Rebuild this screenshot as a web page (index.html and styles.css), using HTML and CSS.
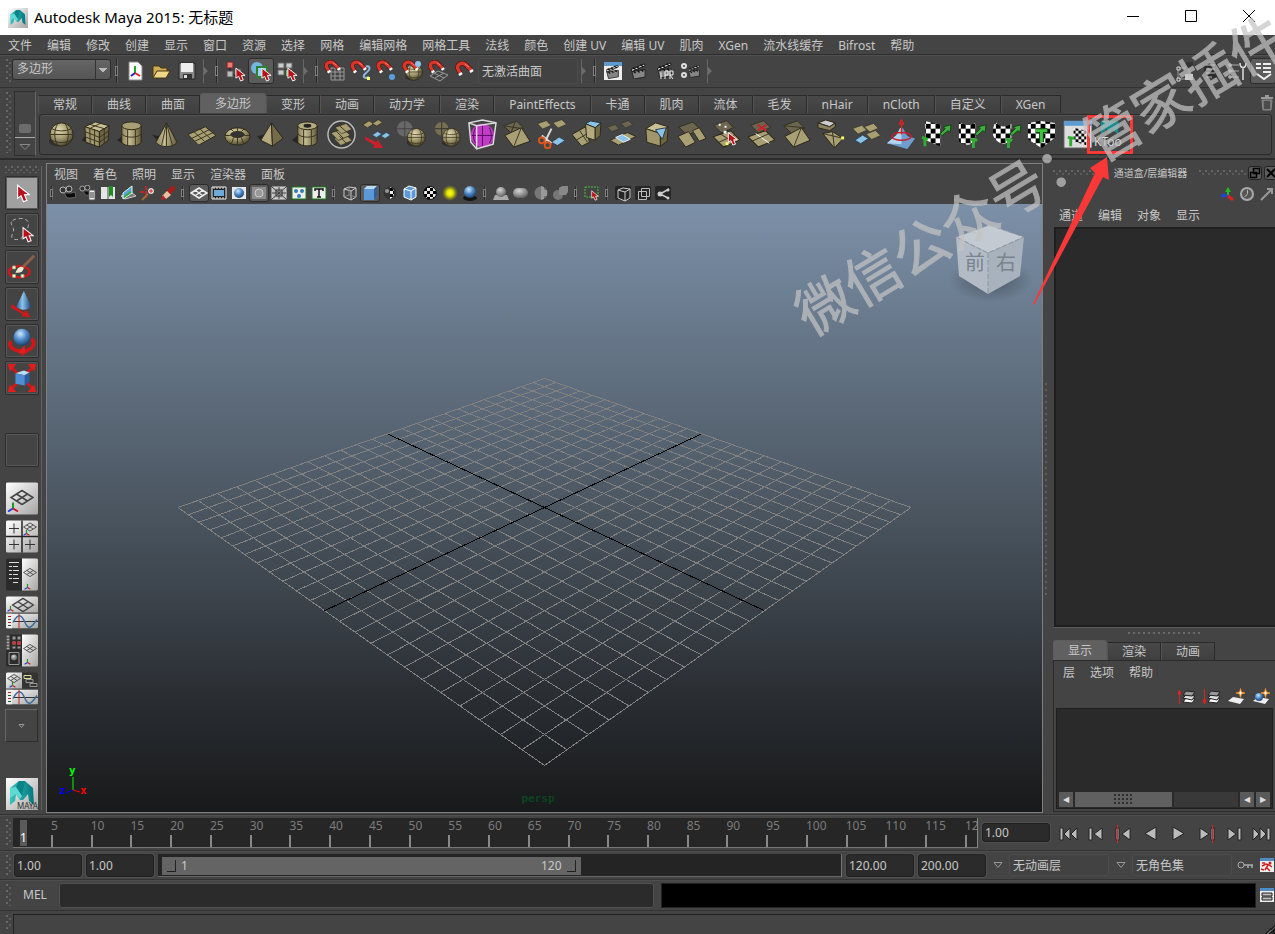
FILE: index.html
```
<!DOCTYPE html>
<html lang="zh-CN">
<head>
    <meta charset="UTF-8">
    <meta name="viewport" content="width=device-width, initial-scale=1.0">
    <title>Autodesk Maya 2015: 无标题</title>
    <link rel="stylesheet" href="styles.css">
</head>
<body>

    <!-- shared gradients and symbols -->
    <svg class="defs" width="0" height="0" aria-hidden="true">
        <defs>
            <radialGradient id="tanBall" cx=".4" cy=".3" r=".75"><stop offset="0" stop-color="#e3dbb4"/><stop offset=".5" stop-color="#a3996e"/><stop offset="1" stop-color="#443f28"/></radialGradient>
            <linearGradient id="tan" x1="0" x2="1"><stop offset="0" stop-color="#8d845c"/><stop offset=".4" stop-color="#c4ba90"/><stop offset="1" stop-color="#5f583b"/></linearGradient>
            <radialGradient id="blueBall" cx=".4" cy=".3" r=".75"><stop offset="0" stop-color="#cfe8ff"/><stop offset=".5" stop-color="#4c88c6"/><stop offset="1" stop-color="#173763"/></radialGradient>
            <radialGradient id="greyBall" cx=".4" cy=".3" r=".75"><stop offset="0" stop-color="#d5d5d5"/><stop offset="1" stop-color="#5a5a5a"/></radialGradient>
            <radialGradient id="yellowBall"><stop offset="0" stop-color="#ffff30"/><stop offset=".4" stop-color="#e0e000"/><stop offset="1" stop-color="#a0a000" stop-opacity="0"/></radialGradient>
            <radialGradient id="cubeShade"><stop offset="0" stop-color="#333d47" stop-opacity=".6"/><stop offset="1" stop-color="#333d47" stop-opacity="0"/></radialGradient>
            <linearGradient id="blueCone" x1="0" x2="1"><stop offset="0" stop-color="#2b5f9c"/><stop offset=".4" stop-color="#8cc4ee"/><stop offset="1" stop-color="#1c3f70"/></linearGradient>
            <linearGradient id="teal" x1="0" x2="1"><stop offset="0" stop-color="#35c4c0"/><stop offset="1" stop-color="#04777c"/></linearGradient>
            <linearGradient id="paper" x1="0" x2="1" y1="0" y2="1"><stop offset="0" stop-color="#fff"/><stop offset="1" stop-color="#a5a5a5"/></linearGradient>
            <pattern id="check" width="10" height="10" patternUnits="userSpaceOnUse"><path fill="#fff" d="M0 0h10v10H0z"/><path d="M0 0h5v5H0zM5 5h5v5H5z"/></pattern>
            <pattern id="checkS" width="6" height="6" patternUnits="userSpaceOnUse"><path fill="#eee" d="M0 0h6v6H0z"/><path d="M0 0h3v3H0zM3 3h3v3H3z"/></pattern>
        </defs>
        <symbol id="cursor" viewBox="0 0 12 16"><path d="M1 1v11l3-2 2 5 3-1-2-5h4z" fill="#b8111a" stroke="#fff"/></symbol>
        <symbol id="magnet" viewBox="0 0 20 20"><path d="m5 12-2-4C1 4 7 0 11 4l5 5" fill="none" stroke="#5a1512" stroke-width="5"/><path d="m5 12-2-4C1 4 7 0 11 4l5 5" fill="none" stroke="#d8372c" stroke-width="3.500"/><path d="m10 3 4 3" stroke="#f08a7c"/><path d="m4 14 3-2M15 11l3-2" stroke="#fff" stroke-width="2.500"/></symbol>
        <symbol id="clap" viewBox="1 1 17 17"><path d="M2 10 16 8v8L4 18z" fill="#858585" stroke="#222"/><path d="m1 8 14-6 1 2L2 10z" fill="#e4e4e4" stroke="#111"/><path d="m3 6 3 2M7 5l3 2M11 3l3 2M4 10l2 2M8 9l2 2M12 8l2 2" stroke="#111" stroke-width="1.500"/></symbol>
        <symbol id="tripod" viewBox="0 0 12 12"><path d="M6 7V1" stroke="#1a9a1a" stroke-width="2"/><path d="M6 7 1 10" stroke="#1c3fe0" stroke-width="2"/><path d="m6 7 5 3" stroke="#d01818" stroke-width="2"/></symbol>
        <symbol id="mesh" viewBox="0 0 24 16"><path d="M12 1 23 8l-11 7L1 8zM6.500 4.500l11 7M17.500 4.500l-11 7" fill="none" stroke="#444" stroke-width="1.500"/></symbol>
        <symbol id="camera" viewBox="0 0 18 16"><circle cx="4" cy="5" r="3" fill="#333" stroke="#bbb"/><circle cx="10" cy="4" r="3" fill="#333" stroke="#bbb"/><path d="M5 8h7l4-1 1 5-4 1H8z" fill="#0c0c0c" stroke="#666"/></symbol>
        <symbol id="quad" viewBox="0 0 18 12"><path d="m1 7 9-6 7 4-9 6z" fill="#a89d70" stroke="#2c2919"/></symbol>
        <symbol id="quadDark" viewBox="0 0 18 12"><path d="m1 7 9-6 7 4-9 6z" fill="#6c6650" stroke="#2c2919"/></symbol>
        <symbol id="quadBlue" viewBox="0 0 18 12"><path d="m1 7 9-6 7 4-9 6z" fill="#8bc3e8" stroke="#25394a"/></symbol>
        <!-- wide tile, lies flatter than quad -->
        <symbol id="tile" viewBox="0 0 28 18"><path d="M1 7 18 1l9 9-16 7z" fill="#a99f75" stroke="#2b2817"/></symbol>
        <symbol id="tileDark" viewBox="0 0 28 18"><path d="M1 7 18 1l9 9-16 7z" fill="#6c6650" stroke="#2b2817"/></symbol>
        <symbol id="ball" viewBox="0 0 26 26"><ellipse cx="9" cy="20" rx="9" ry="5" fill="#222" opacity=".6"/><circle cx="13" cy="13" r="12" fill="url(#tanBall)" stroke="#2b2817"/><path d="M9 2c-4 7-4 15 0 22M17 2c4 7 4 15 0 22M1 13h24M3 7c6 3 14 3 20 0M3 19c6 3 14 3 20 0" fill="none" stroke="#39341f"/></symbol>
        <symbol id="greenArrow" viewBox="0 0 14 12"><path d="m1 11 6-6-2-2 8-2-1 8-2-2-6 5z" fill="#3fae3f" stroke="#123f12"/></symbol>
        <symbol id="maya" viewBox="0 0 32 32"><path d="M0 0h32v32H0z" fill="url(#paper)"/><path d="M4 10 13 3h6l8 7 1 17-5-4-1-7-5 6h-3l-4-6-1 7-5 4z" fill="url(#teal)"/><path d="M13 3h6l-3 15-6-9z" fill="#0a8388"/><path d="m4 10 6-1 6 9-2 3-4-5-6 4z" fill="#5fd9d2"/></symbol>
        <symbol id="layers" viewBox="0 0 14 16"><path d="m1 13 3-4 9 1-3 4z" fill="#fff" stroke="#222"/><path d="m1 9 3-3 9 1-3 4z" fill="#ddd" stroke="#222"/><path d="m1 6 3-4 9 1-3 4z" fill="#999" stroke="#222"/></symbol>
        <symbol id="spark" viewBox="0 0 10 10"><path d="m5 0 1 4 4 1-4 1-1 4-1-4-4-1 4-1z" fill="#fff" stroke="#f08a1c"/></symbol>
        <symbol id="curve" viewBox="0 0 32 15"><path fill="url(#paper)" d="M0 0h32v15H0z"/><path d="M0 0h6v15H0z" fill="#eee"/><path d="M2 3h3M2 9h3" stroke="#b22"/><path d="M2 6h3M2 12h3" stroke="#252"/><path d="M7 8h25" stroke="#333"/><path d="M7 9c5-9 8-9 12 0s7 4 12-3" fill="none" stroke="#3a6c9c" stroke-width="1.500"/><path d="M13 0v15" stroke="#c22"/></symbol>
    </svg>

    <header class="titlebar">
        <svg class="app-icon" width="20" height="20"><use href="#maya"/></svg>
        <h1>Autodesk Maya 2015: 无标题</h1>
        <div class="window-buttons">
            <button aria-label="最小化"><svg width="14" height="14"><path d="M1 7.500h12" stroke="#000"/></svg></button>
            <button aria-label="最大化"><svg width="14" height="14"><path d="M1.500 1.500h11v11h-11z" fill="none" stroke="#000"/></svg></button>
            <button aria-label="关闭"><svg width="14" height="14"><path d="m1 1 12 12M13 1 1 13" stroke="#000"/></svg></button>
        </div>
    </header>

    <nav class="menubar">
        <button>文件</button><button>编辑</button><button>修改</button><button>创建</button><button>显示</button><button>窗口</button><button>资源</button><button>选择</button><button>网格</button><button>编辑网格</button><button>网格工具</button><button>法线</button><button>颜色</button><button>创建 UV</button><button>编辑 UV</button><button>肌肉</button><button>XGen</button><button>流水线缓存</button><button>Bifrost</button><button>帮助</button>
    </nav>

    <!-- status line -->
    <div class="statusline">
        <span class="dragger"></span>
        <select class="menu-set" aria-label="菜单集"><option>多边形</option></select>
        <span class="grip"></span>
        <div class="tools">
            <button aria-label="新建场景"><svg width="20" height="20"><path d="M4 1h9l4 4v14H4z" fill="#fff" stroke="#888"/><path d="M10 12V5" stroke="#2a2" stroke-width="2"/><path d="m10 12-4 3" stroke="#22c" stroke-width="2"/><path d="m10 12 5 3" stroke="#d22" stroke-width="2"/></svg></button>
            <button aria-label="打开场景"><svg width="20" height="20"><path d="M2 17V5h6l2 2h6v3" fill="#cdaa55" stroke="#4a3810"/><path d="m2 17 4-7h13l-4 7z" fill="#f0d68a" stroke="#4a3810"/></svg></button>
            <button aria-label="保存场景"><svg width="20" height="20"><path d="M2 2h16v16H2z" fill="#8a8a8a" stroke="#222"/><path d="M4 2h12v9H4z" fill="#eee"/><path d="M6 13h9v5H6z" fill="#333"/><path d="M7 14h3v3H7z" fill="#ddd"/></svg></button>
        </div>
        <span class="fold"></span>
        <span class="grip"></span>
        <div class="tools">
            <button aria-label="按层次选择"><svg width="24" height="22"><path d="M7 7v8h7" fill="none" stroke="#111"/><path d="M4 2h6v6H4z" fill="#e77" stroke="#722"/><path d="M4 11h6v6H4z" fill="#bbb" stroke="#555"/><path d="M12 9h6v6h-6z" fill="#999" stroke="#555"/><use href="#cursor" x="12" y="7" width="11" height="15"/></svg></button>
            <button class="on" aria-label="按对象类型选择"><svg width="24" height="22"><circle cx="8" cy="8" r="6" fill="#70b7e2"/><path d="M8 7h10v10H8z" fill="#9bd2ef" stroke="#2f7f2f" stroke-width="2"/><use href="#cursor" x="12" y="7" width="11" height="15"/></svg></button>
            <button aria-label="按组件类型选择"><svg width="24" height="22"><path d="M3 3h6v5H3zM11 3h6v5h-6zM3 10h6v5H3z" fill="#ccc" stroke="#666"/><path d="M11 10h6v6h-6z" fill="#69c46e"/><use href="#cursor" x="12" y="7" width="11" height="15"/></svg></button>
        </div>
        <span class="fold"></span>
        <span class="grip"></span>
        <div class="tools">
            <button aria-label="捕捉到栅格"><svg width="24" height="24"><path d="M8 9h13v12H8zM12 9v12M17 9v12M8 13h13M8 17h13" fill="none" stroke="#999"/><use href="#magnet" x="1" y="1" width="18" height="18"/></svg></button>
            <button aria-label="捕捉到曲线"><svg width="24" height="24"><path d="M13 9c8-4 10 0 4 5-5 4-1 6 3 4" fill="none" stroke="#8cb9dc" stroke-width="2"/><path d="M18 18h3v3h-3z" fill="#ff6"/><use href="#magnet" x="1" y="1" width="18" height="18"/></svg></button>
            <button aria-label="捕捉到点"><svg width="24" height="24"><circle cx="17" cy="18" r="3" fill="#5aa0dd"/><use href="#magnet" x="1" y="1" width="18" height="18"/></svg></button>
            <button aria-label="捕捉到投影中心"><svg width="24" height="24"><use href="#ball" x="4" y="4" width="18" height="18"/><use href="#magnet" x="1" y="1" width="18" height="18"/><circle cx="17" cy="5" r="3" fill="#8cc4ee"/></svg></button>
            <button aria-label="捕捉到视图平面"><svg width="24" height="24"><path d="m3 17 8-5 10 4-8 6zM7 14l10 5M17 14l-9 5" fill="none" stroke="#999"/><use href="#magnet" x="1" y="1" width="18" height="18"/></svg></button>
            <button aria-label="激活选定对象"><svg width="24" height="24"><use href="#magnet" x="2" y="2" width="20" height="20"/></svg></button>
        </div>
        <input class="live-surface" aria-label="激活曲面" value="无激活曲面">
        <span class="fold"></span>
        <span class="grip"></span>
        <div class="tools">
            <button aria-label="渲染视图"><svg width="22" height="22"><path d="M2 2h18v18H2z" fill="#eee"/><path d="M2 2h18v4H2z" fill="#5d9bd0"/><use href="#clap" x="4" y="4" width="14" height="15"/></svg></button>
            <button aria-label="渲染当前帧"><svg width="22" height="22"><use href="#clap" x="3" y="3" width="16" height="16"/></svg></button>
            <button aria-label="IPR 渲染"><svg width="22" height="22"><use href="#clap" x="3" y="2" width="16" height="16"/><path d="M7 11v8M11 19v-8h3v4h-3M16 19v-8h3v4h-3l3 4" fill="none" stroke="#eee"/></svg></button>
            <button aria-label="渲染设置"><svg width="22" height="22"><circle cx="4" cy="6" r="2" fill="none" stroke="#ddd" stroke-width="2"/><circle cx="4" cy="15" r="2" fill="none" stroke="#ddd" stroke-width="2"/><use href="#clap" x="8" y="3" width="13" height="16"/></svg></button>
        </div>
        <span class="fold"></span>
        <div class="tools sidebar-toggles">
            <button aria-label="建模工具包"><svg width="22" height="22"><path d="M4 8h11v11H4z" fill="none" stroke="#999"/><path d="M12 2h7v7h-7z" fill="#333"/><path d="M11 14h8v6h-8z" fill="#ccc"/><path d="M3 7h3v3H3zM3 18h3v3H3z" fill="#444" stroke="#ddd"/></svg></button>
            <button aria-label="属性编辑器"><svg width="22" height="22"><path d="M4 3h13v15H4z" fill="#2c2c2c"/><path d="M6 5h9M6 9h9M6 13h9M6 17h6" stroke="#bbb"/></svg></button>
            <button aria-label="工具设置"><svg width="22" height="22"><path d="M3 5h10M3 11h10M3 17h10" stroke="#aaa"/><path d="M3 4h2v2H3zM3 10h2v2H3zM3 16h2v2H3z" fill="#222" stroke="#ddd"/><path d="M17 8v12M14 3c0 6 6 6 6 0" fill="none" stroke="#ddd" stroke-width="1.500"/></svg></button>
            <button class="on" aria-label="通道盒"><svg width="22" height="22"><path d="M4 3h5v2H4zM4 7h5v2H4zM11 3h8v2h-8zM11 7h8v2h-8zM11 11h8v2h-8z" fill="#eee"/><path d="m5 14 7 5 7-5" fill="none" stroke="#eee" stroke-width="2"/></svg></button>
        </div>
    </div>

    <!-- shelf -->
    <div class="shelf">
        <span class="dragger"></span>
        <div class="shelf-side">
            <button class="shelf-chip" aria-label="切换工具架选项卡"></button>
            <button class="shelf-menu" aria-label="工具架菜单"><svg width="12" height="8"><path d="M1 1.500h10l-5 5z" fill="#444" stroke="#888"/></svg></button>
        </div>
        <div class="shelf-body">
            <div class="tabs">
                <button>常规</button><button>曲线</button><button>曲面</button><button class="active">多边形</button><button>变形</button><button>动画</button><button>动力学</button><button>渲染</button><button>PaintEffects</button><button>卡通</button><button>肌肉</button><button>流体</button><button>毛发</button><button>nHair</button><button>nCloth</button><button>自定义</button><button>XGen</button>
                <svg class="trash" width="14" height="16"><path d="M1 3h12M5 1h4" stroke="#999" stroke-width="2"/><path d="M2 5h10l-1 10H3z" fill="#777" stroke="#888"/><path d="M5 6v8M7 6v8M9 6v8" stroke="#222"/></svg>
            </div>
            <div class="shelf-icons">
                <button aria-label="球体"><svg viewBox="0 0 32 32"><use href="#ball" x="3" y="3" width="26" height="26"/></svg></button>
                <button aria-label="立方体"><svg viewBox="0 0 32 32"><path d="M1 22 8 12v14z" fill="#262626"/><path d="m4 8 11-5 14 4-10 6z" fill="#c9bf94" stroke="#2b2817"/><path d="m4 8 15 5v16L5 24z" fill="#a1966c" stroke="#2b2817"/><path d="m19 13 10-6-1 15-9 7z" fill="#6c6443" stroke="#2b2817"/><path d="m9 9.500.5 16M14 11v17M4 13l15 6 10-7M4.500 18.500 19 24l9.500-7M9 5.500l15 4.500M24 10v15M9.500 9.500 20 4.500" fill="none" stroke="#39341f"/></svg></button>
                <button aria-label="圆柱体"><svg viewBox="0 0 32 32"><path d="M1 22 8 16v10z" fill="#262626"/><path d="M6 7v17c2 5 18 5 20 0V7z" fill="url(#tan)" stroke="#2b2817"/><ellipse cx="16" cy="7" rx="10" ry="4" fill="#a99f75" stroke="#2b2817"/><path d="M6 15c2 5 18 5 20 0M12 11v17M20 11v17" fill="none" stroke="#39341f"/></svg></button>
                <button aria-label="圆锥体"><svg viewBox="0 0 32 32"><path d="m1 16 12 3-4 6z" fill="#262626"/><path d="m16 4 11 20c-4 6-18 6-22 0z" fill="url(#tan)" stroke="#2b2817"/><path d="m16 4-5 23M16 4v24M16 4l6 23" stroke="#39341f"/></svg></button>
                <button aria-label="平面"><svg viewBox="0 0 32 32"><path d="m2 16 18-8 11 9-18 10z" fill="#a99f75" stroke="#2b2817"/><path d="m8 13 11 10M14 10l11 10M6 20l18-9M9 23l19-9" stroke="#39341f"/></svg></button>
                <button aria-label="圆环"><svg viewBox="0 0 32 32"><ellipse cx="17" cy="18" rx="13" ry="9" fill="url(#tanBall)" stroke="#2b2817"/><ellipse cx="17" cy="16" rx="7" ry="3" fill="#333" stroke="#2b2817"/><path d="m4 17 6 0M30 17h-6M10 10l3 3M24 10l-3 3M11 25l2-6M23 25l-2-6M17 9v4M17 19v8" stroke="#39341f"/></svg></button>
                <button aria-label="棱锥"><svg viewBox="0 0 32 32"><path d="m1 18 10-3-5 8z" fill="#262626"/><path d="M16 4 5 22l12 6z" fill="#b6ab80" stroke="#2b2817"/><path d="m16 4 12 16-11 8z" fill="#746b49" stroke="#2b2817"/></svg></button>
                <button aria-label="管道"><svg viewBox="0 0 32 32"><path d="M1 22 8 16v10z" fill="#262626"/><path d="M7 7v17c2 5 18 5 20 0V7z" fill="url(#tan)" stroke="#2b2817"/><ellipse cx="17" cy="7" rx="10" ry="4" fill="#b6ab80" stroke="#2b2817"/><ellipse cx="17" cy="7" rx="4" ry="2" fill="#222"/><path d="M7 15c2 5 18 5 20 0M13 11v17M21 11v17" fill="none" stroke="#39341f"/></svg></button>
                <button aria-label="平滑"><svg viewBox="0 0 32 32"><circle cx="16" cy="16" r="14" fill="#3a3a3a" stroke="#bbb" stroke-width="1.500"/><use href="#tile" x="7" y="15" width="21" height="13"/><use href="#tile" x="4" y="9" width="22" height="14"/><use href="#tile" x="8" y="4" width="20" height="12"/><path d="m14 7 8 7M10 12l8 8M14 18l7 7" stroke="#39341f"/></svg></button>
                <button aria-label="提取"><svg viewBox="0 0 32 32"><use href="#quad" x="1" y="1" width="13" height="9"/><use href="#quad" x="11" y="0" width="12" height="8"/><use href="#quadBlue" x="11" y="12" width="11" height="8"/><use href="#quadBlue" x="20" y="13" width="11" height="8"/><path d="m4 18 12 6 1-3 6 9-11 0 2-3-10-6z" fill="#c9202a"/></svg></button>
                <button aria-label="结合"><svg viewBox="0 0 32 32"><circle cx="9" cy="10" r="8" fill="#777" opacity=".7"/><path d="M9 2v16M1 10h16" stroke="#444"/><use href="#ball" x="11" y="9" width="20" height="20"/></svg></button>
                <button aria-label="分离"><svg viewBox="0 0 32 32"><circle cx="11" cy="10" r="7" fill="#767052"/><path d="M11 3v14M4 10h14" stroke="#333"/><use href="#ball" x="11" y="9" width="20" height="20"/></svg></button>
                <button aria-label="平滑代理"><svg viewBox="0 0 32 32"><circle cx="17" cy="17" r="12" fill="#c03cc6"/><path d="M17 6v22M6 17h22M10 9c-3 5-3 12 0 16M24 9c3 5 3 12 0 16" fill="none" stroke="#5c0c62"/><path d="m3 4 14-3 14 3-3 22-17 5-6-7zM3 4l8 3 20-3M11 7v24" fill="none" stroke="#ddd" stroke-width="1.500"/></svg></button>
                <button aria-label="三角化"><svg viewBox="0 0 32 32"><use href="#tileDark" x="2" y="1" width="22" height="15"/><path d="m3 7 19 3M15 2l-5 13" stroke="#39341f"/><path d="m4 17 17-8 9 14-17 6z" fill="#a99f75" stroke="#2b2817"/><path d="M21 9 13 29" stroke="#39341f"/></svg></button>
                <button aria-label="剪切"><svg viewBox="0 0 32 32"><use href="#tile" x="1" y="1" width="15" height="10"/><use href="#tile" x="17" y="0" width="15" height="10"/><use href="#quadBlue" x="15" y="17" width="16" height="12"/><path d="M16 10 9 24M6 17l10 8" stroke="#ddd" stroke-width="2"/><circle cx="6" cy="22" r="3" fill="none" stroke="#d8561c" stroke-width="2"/><circle cx="12" cy="27" r="3" fill="none" stroke="#d8561c" stroke-width="2"/></svg></button>
                <button aria-label="挤出"><svg viewBox="0 0 32 32"><path d="m1 16 14-8 4 16-8 4z" fill="#a99f75" stroke="#2b2817"/><path d="m5 22 12-7M9 12l8 12" stroke="#39341f"/><path d="m15 5 5-3 11 2-6 5z" fill="#8bc3e8" stroke="#25394a"/><path d="m15 5 10 4v13l-9-3z" fill="#b6ab80" stroke="#2b2817"/><path d="m25 9 6-5-1 13-5 5z" fill="#746b49" stroke="#2b2817"/></svg></button>
                <button aria-label="桥接"><svg viewBox="0 0 32 32"><use href="#tileDark" x="1" y="5" width="13" height="9"/><use href="#tileDark" x="15" y="1" width="13" height="9"/><path d="m4 22 18-8 9 4-18 9z" fill="#a99f75" stroke="#2b2817"/><path d="m10 19 7-3 8 5-7 3z" fill="#8bc3e8" stroke="#eee"/></svg></button>
                <button aria-label="倒角"><svg viewBox="0 0 32 32"><path d="m5 10 10-6 13 4-8 7z" fill="#c9bf94" stroke="#2b2817"/><path d="m5 10 15 5v13L6 24z" fill="#a1966c" stroke="#2b2817"/><path d="m20 15 8-7-1 15-7 5z" fill="#6c6443" stroke="#2b2817"/><path d="m15 11 11-2-4 12z" fill="#8bc3e8" stroke="#25394a"/></svg></button>
                <button aria-label="合并"><svg viewBox="0 0 32 32"><use href="#tileDark" x="2" y="2" width="24" height="16"/><path d="m2 18 11-5 7 11-10 5zM17 12l7-3 7 11-7 3z" fill="#a99f75" stroke="#2b2817"/></svg></button>
                <button aria-label="目标焊接"><svg viewBox="0 0 32 32"><use href="#tileDark" x="2" y="1" width="22" height="14"/><use href="#tile" x="1" y="11" width="30" height="19"/><path d="m9 15 14 9M8 24l16-7" stroke="#39341f"/><path d="M8 5h2v2H8zM14 7h2v2h-2zM13 12h3v3h-3z" fill="#fff"/><path d="M15 24h3v3h-3z" fill="#ff6"/><use href="#cursor" x="17" y="13" width="11" height="15"/></svg></button>
                <button aria-label="合并到中心"><svg viewBox="0 0 32 32"><use href="#tileDark" x="4" y="1" width="22" height="14"/><use href="#tile" x="1" y="11" width="30" height="19"/><path d="m10 15 14 10" stroke="#fff"/><path d="m6 23 18-8" stroke="#39341f"/><path d="m12 6 9 6M12 12l9-6" stroke="#c9202a" stroke-width="2"/></svg></button>
                <button aria-label="翻转三角形"><svg viewBox="0 0 32 32"><use href="#tileDark" x="2" y="1" width="23" height="15"/><path d="m3 7 21 2" stroke="#39341f"/><path d="m4 18 17-9 9 13-17 7z" fill="#a99f75" stroke="#2b2817"/><path d="M21 9 13 29" stroke="#39341f"/></svg></button>
                <button aria-label="多切割"><svg viewBox="0 0 32 32"><path d="m2 4 8-3 10 3-6 4z" fill="#ccc" stroke="#2b2817"/><path d="M2 4v5l12 3 6-4V4l-6 4z" fill="#8a8160" stroke="#2b2817"/><path d="m7 15 10-2 11 7-9 10z" fill="#a99f75" stroke="#2b2817"/><path d="m7 15 21 5M19 30l-2-17" stroke="#39341f"/><path d="M26 18h3v3h-3z" fill="#ff6"/></svg></button>
                <button aria-label="插入循环边"><svg viewBox="0 0 32 32"><use href="#tile" x="1" y="6" width="16" height="10"/><use href="#tile" x="13" y="4" width="16" height="10"/><use href="#tile" x="15" y="11" width="16" height="11"/><use href="#quadBlue" x="3" y="15" width="16" height="12"/></svg></button>
                <button aria-label="软选择"><svg viewBox="0 0 32 32"><path d="m1 25 8-7c4-2 4-9 7-9s3 6 7 9l7 2-8 11z" fill="#6e9dd0"/><path d="m1 25 8-7c4-2 4-9 7-9v17z" fill="#b4d4f2"/><ellipse cx="16" cy="18" rx="10" ry="4" fill="none" stroke="#c9202a" stroke-width="1.500"/><path d="M16 16V4M14 5l2-4 2 4z" fill="none" stroke="#d22" stroke-width="1.500"/></svg></button>
                <button aria-label="平面 UV"><svg viewBox="0 0 32 32"><path d="m4 2 16 4v22L5 22z" fill="url(#check)"/><use href="#greenArrow" x="18" y="5" width="14" height="12"/><path d="m1 19 6 2M4 20v8" stroke="#2fae2f" stroke-width="3"/></svg></button>
                <button aria-label="圆柱 UV"><svg viewBox="0 0 32 32"><path d="M3 3c5 4 12 4 17 1v20c-6 4-13 3-17-1z" fill="url(#check)"/><use href="#greenArrow" x="18" y="5" width="14" height="12"/><path d="m15 21 7 1M18 22v8" stroke="#2fae2f" stroke-width="3"/></svg></button>
                <button aria-label="球形 UV"><svg viewBox="0 0 32 32"><path d="M5 3c3 6 11 6 16 2v19C12 29 2 22 2 15 2 10 3 5 5 3z" fill="url(#check)"/><use href="#greenArrow" x="18" y="5" width="14" height="12"/><path d="m15 21 7 1M18 22v8" stroke="#2fae2f" stroke-width="3"/></svg></button>
                <button aria-label="自动 UV"><svg viewBox="0 0 32 32"><path d="m2 4 13-2 15 2v15l-14 11L2 21z" fill="url(#check)"/><path d="M10 12h12M16 12v12" stroke="#0c470c" stroke-width="5"/><path d="M10 12h12M16 12v12" stroke="#42c242" stroke-width="3"/></svg></button>
                <button aria-label="UV 编辑器"><svg viewBox="0 0 32 32"><path d="M3 2h29v28H3z" fill="#ddd" stroke="#555"/><path d="M3 2h29v5H3z" fill="#5d9bd0"/><path d="m13 9 13 3v15l-13-4z" fill="url(#checkS)"/><path d="m7 19 7 1M10 20v8" stroke="#2fae2f" stroke-width="3"/></svg></button>
                <button class="ktools" aria-label="KTools"><svg viewBox="0 0 32 32"><path d="M7 3h18v14l-4-3-2-3-3 5-3-5-2 3-4 3z" fill="#158a8c"/></svg><span>KToo</span></button>
            </div>
        </div>
    </div>

    <main class="workspace">
        <!-- tool box -->
        <aside class="toolbox">
            <span class="hdragger"></span>
            <button class="tool on" aria-label="选择"><svg viewBox="0 0 32 32"><use href="#cursor" x="10" y="6" width="15" height="21"/></svg></button>
            <button class="tool" aria-label="套索"><svg viewBox="0 0 32 32"><path d="M6 6c5-4 18-3 17 4-1 8-5 4-5 9s-4 8-10 7c-6-2-1-6-1-10S2 9 6 6z" fill="none" stroke="#bbb" stroke-dasharray="4 3"/><use href="#cursor" x="16" y="12" width="13" height="18"/></svg></button>
            <button class="tool" aria-label="绘制选择"><svg viewBox="0 0 32 32"><ellipse cx="13" cy="21" rx="11" ry="6" fill="none" stroke="#d01818" stroke-width="2.500"/><path d="m17 16 12-12" stroke="#8a6048" stroke-width="3"/><path d="M9 22c2-6 6-8 9-5-1 4-4 6-9 5z" fill="#f2ead0"/><path d="M6 15h3v3H6zM6 24h3v3H6zM15 24h3v3h-3z" fill="#ffe" stroke="#aa7"/></svg></button>
            <button class="tool" aria-label="移动"><svg viewBox="0 0 32 32"><path d="m18 2 8 17c-3 4-13 4-16 0z" fill="url(#blueCone)"/><path d="m5 16 13 9 2-3 5 8-10-1 2-2L4 20z" fill="#d01818"/></svg></button>
            <button class="tool" aria-label="旋转"><svg viewBox="0 0 32 32"><path d="M4 16c-4 8 8 12 13 10v3l8-5c5-3 4-8 1-10" fill="none" stroke="#d01818" stroke-width="4"/><circle cx="16" cy="12" r="9" fill="url(#blueBall)"/><path d="m12 29 7-9v9z" fill="#e02020"/></svg></button>
            <button class="tool" aria-label="缩放"><svg viewBox="0 0 32 32"><path d="m3 3 26 26M29 3 3 29" stroke="#d01818" stroke-width="3"/><path d="M1 1h9l-7 8zM31 1h-9l7 8zM1 31h9l-7-8zM31 31h-9l7-8z" fill="#e41c1c"/><path d="m9 11 9-3 6 2-5 3z" fill="#b9dcf8"/><path d="m9 11 10 2v11l-10-2z" fill="#4d8fd6"/><path d="m19 13 5-3v10l-5 4z" fill="#295c9c"/></svg></button>
            <button class="tool last" aria-label="上次使用的工具"></button>
            <button class="layout" aria-label="单个透视视图"><svg viewBox="0 0 32 32"><path fill="url(#paper)" d="M0 0h32v32H0z"/><use href="#mesh" x="4" y="7" width="24" height="16"/><use href="#tripod" x="1" y="19" width="12" height="12"/></svg></button>
            <button class="layout" aria-label="四视图"><svg viewBox="0 0 32 32"><path fill="url(#paper)" d="M0 0h32v32H0z"/><path d="M0 16h32M16 0v32" stroke="#222" stroke-width="1.500"/><path d="M8 3v10M3 8h10M8 19v10M3 24h10M24 19v10M19 24h10" stroke="#333"/><use href="#mesh" x="17" y="1" width="14" height="11"/><use href="#tripod" x="17" y="9" width="7" height="7"/></svg></button>
            <button class="layout" aria-label="大纲视图"><svg viewBox="0 0 32 32"><path fill="#2b2b2b" d="M0 0h16v32H0z"/><path fill="url(#paper)" d="M16 0h16v32H16z"/><path d="M3 4h10M3 8h3M7 8h5M3 12h3M7 12h6M3 16h3M7 16h5M3 20h3M7 20h6M7 24h5" stroke="#ddd"/><use href="#mesh" x="17" y="8" width="14" height="12"/><use href="#tripod" x="18" y="25" width="7" height="7"/></svg></button>
            <button class="layout" aria-label="透视/曲线图"><svg viewBox="0 0 32 32"><path fill="url(#paper)" d="M0 0h32v16H0z"/><use href="#mesh" x="5" y="1" width="24" height="15"/><use href="#tripod" x="1" y="9" width="7" height="7"/><use href="#curve" x="0" y="17" width="32" height="15"/></svg></button>
            <button class="layout" aria-label="Hypershade/透视"><svg viewBox="0 0 32 32"><path fill="#2b2b2b" d="M0 0h16v32H0z"/><path fill="url(#paper)" d="M16 0h16v32H16z"/><path d="M2 1v14" stroke="#aaa" stroke-width="3" stroke-dasharray="2 1"/><path d="M8 2v12M13 2v12" stroke="#999" stroke-width="3" stroke-dasharray="3 2"/><path d="M8 7v3M13 7v3" stroke="#d33" stroke-width="3"/><path d="M3 18h10v12H3z" fill="none" stroke="#999"/><circle cx="8" cy="23" r="3" fill="url(#greyBall)"/><use href="#mesh" x="17" y="8" width="14" height="12"/><use href="#tripod" x="18" y="24" width="7" height="7"/></svg></button>
            <button class="layout" aria-label="透视/超图/曲线图"><svg viewBox="0 0 32 32"><path fill="url(#paper)" d="M0 0h16v16H0z"/><path fill="#333" d="M16 0h16v16H16z"/><path d="M18 3h7v3h-7z" fill="none" stroke="#dd9"/><path d="M20 7h7v3h-7zM24 11h7v3h-7z" fill="none" stroke="#999"/><use href="#mesh" x="1" y="1" width="14" height="10"/><use href="#tripod" x="3" y="9" width="7" height="7"/><use href="#curve" x="0" y="17" width="32" height="15"/></svg></button>
            <button class="layout-menu" aria-label="更多布局"><svg width="8" height="6"><path d="M1 1.500h5l-2.500 3z" fill="#444" stroke="#999"/></svg></button>
            <span class="spacer"></span>
            <div class="maya-logo"><svg width="32" height="32"><use href="#maya"/></svg><b>MAYA</b></div>
        </aside>

        <!-- viewport panel -->
        <section class="panel">
            <nav class="panel-menu"><button>视图</button><button>着色</button><button>照明</button><button>显示</button><button>渲染器</button><button>面板</button></nav>
            <div class="panel-tools">
                <span class="grip"></span>
                <button aria-label="选择摄影机"><svg width="18" height="16"><use href="#camera"/></svg></button>
                <button aria-label="摄影机属性"><svg width="18" height="16"><use href="#camera" x="0" y="-1" width="15" height="14"/><path d="M10 5h6v10h-6z" fill="#eee" stroke="#555"/><path d="M11 8h4M11 10h4M11 12h4" stroke="#333"/></svg></button>
                <button aria-label="书签"><svg width="18" height="16"><path d="M2 2h14v12H2z" fill="#e5e5e5"/><path d="M9 2v12" stroke="#444"/><path d="M10 1h4v11l-2-2-2 2z" fill="#1d8d1d"/></svg></button>
                <button aria-label="图像平面"><svg width="18" height="16"><path d="m2 11 4 3 11-3-4-3z" fill="#777" stroke="#ccc"/><path d="m4 8 9-7v7l-9 6z" fill="#5aa0dd" stroke="#dfd"/><path d="m5 11 7-5v2l-7 5z" fill="#3a3"/></svg></button>
                <button aria-label="二维平移/缩放"><svg width="18" height="16"><path d="M7 1v12M1 7h12" stroke="#d22" stroke-width="1.500" stroke-dasharray="4 1"/><circle cx="12" cy="6" r="3.500" fill="#eee" stroke="#333"/><path d="M10 6h4M12 4v4" stroke="#d22"/><path d="m9 9-6 6" stroke="#a06a30" stroke-width="2"/></svg></button>
                <button aria-label="油性铅笔"><svg width="18" height="16"><path d="M15 2 9 8" stroke="#a81c1c" stroke-width="5"/><path d="m8 6 4 4-5 4-4-3z" fill="#e8c2a0"/><path d="m2 15 5-1-3-4z" fill="#b22"/></svg></button>
                <span class="grip"></span>
                <button class="on" aria-label="栅格"><svg width="18" height="16"><path d="m1 8 8-5 8 5-8 5zM5 5l8 6M13 5l-8 6" fill="none" stroke="#eee" stroke-width="1.500"/></svg></button>
                <button aria-label="胶片门"><svg width="18" height="16"><path d="M2 2h14v12H2z" fill="#222" stroke="#eee"/><path d="M3 3h12M3 13h12" stroke="#eee" stroke-dasharray="2 1"/><path d="M4 5h10v6H4z" fill="#6da9da"/></svg></button>
                <button aria-label="分辨率门"><svg width="18" height="16"><path d="M2 2h14v12H2z" fill="#e8e8e8"/><circle cx="9" cy="8" r="5" fill="url(#blueBall)"/></svg></button>
                <button class="on" aria-label="门遮罩"><svg width="18" height="16"><path d="M2 2h14v12H2z" fill="#8c8c8c"/><circle cx="9" cy="8" r="4" fill="#999" stroke="#ccc"/></svg></button>
                <button aria-label="区域图"><svg width="18" height="16"><path d="M2 2h14v12H2z" fill="#bbb" stroke="#ddd"/><path d="m2 2 14 12M16 2 2 14M9 2v12M2 8h14" stroke="#444"/><path d="M6 5h6v6H6z" fill="none" stroke="#333"/></svg></button>
                <button aria-label="安全动作"><svg width="18" height="16"><path d="M2 2h14v12H2z" fill="#eee" stroke="#1d7d1d"/><circle cx="6" cy="6" r="2" fill="#357ab8"/><circle cx="12" cy="6" r="2" fill="#357ab8"/><circle cx="9" cy="11" r="2" fill="#357ab8"/></svg></button>
                <button aria-label="安全标题"><svg width="18" height="16"><path d="M2 2h14v12H2z" fill="#eee" stroke="#1d7d1d"/><path d="M5 6V4h8v2M9 4v8M7 12h4" fill="none" stroke="#111" stroke-width="1.500"/></svg></button>
                <span class="grip"></span>
                <button aria-label="线框"><svg width="18" height="16"><path d="m3 4 5-2 7 1v9l-5 3-7-3zM3 4l7 2 5-3M10 6v9" fill="none" stroke="#ccc"/><path d="M8 2v8l-5 2M8 10l7 2" fill="none" stroke="#888"/></svg></button>
                <button class="on" aria-label="着色"><svg width="18" height="16"><path d="m3 4 3-3h10v10l-3 4H3z" fill="#5d98d6"/><path d="m3 4 3-3h10l-3 3z" fill="#b9dcf8"/><path d="m13 4 3-3v10l-3 4z" fill="#2d5f9f"/></svg></button>
                <button aria-label="使用默认材质"><svg width="18" height="16"><circle cx="9" cy="8" r="6.500" fill="#333"/><path d="M9 2a6.500 6.500 0 0 1 0 12z" fill="url(#checkS)"/><circle cx="6" cy="6" r="2" fill="#999"/></svg></button>
                <button aria-label="着色对象上的线框"><svg width="18" height="16"><path d="m3 4 5-3 7 2v9l-5 3-7-3z" fill="#5d98d6"/><path d="m3 4 5-3 7 2v9l-5 3-7-3zM3 4l7 2 5-3M10 6v9" fill="none" stroke="#fff"/></svg></button>
                <button aria-label="带纹理"><svg width="18" height="16"><circle cx="9" cy="8" r="6.500" fill="url(#checkS)" stroke="#111"/></svg></button>
                <button aria-label="使用所有灯光"><svg width="18" height="16"><circle cx="9" cy="8" r="8" fill="url(#yellowBall)"/></svg></button>
                <button aria-label="阴影"><svg width="18" height="16"><ellipse cx="9" cy="13" rx="7" ry="3" fill="#151515"/><circle cx="9" cy="7" r="6" fill="url(#blueBall)"/></svg></button>
                <span class="grip"></span>
                <button aria-label="环境光遮挡"><svg width="18" height="16"><path d="m3 10-2 5h16l-2-5z" fill="#aaa"/><circle cx="9" cy="7" r="5" fill="url(#greyBall)"/></svg></button>
                <button aria-label="运动模糊"><svg width="18" height="16"><rect x="1" y="3" width="15" height="10" rx="5" fill="url(#greyBall)"/></svg></button>
                <button aria-label="抗锯齿"><svg width="18" height="16"><circle cx="9" cy="8" r="6.500" fill="#777"/><path d="M9 1v14l3-1v-3h3V5h-3V2z" fill="#999"/></svg></button>
                <button aria-label="景深"><svg width="18" height="16"><circle cx="6" cy="10" r="5" fill="#777"/><path d="m7 3 3-2h6v6l-2 3H7z" fill="#888"/></svg></button>
                <span class="grip"></span>
                <button aria-label="隔离选择"><svg width="18" height="16"><path d="M2 2h13v10H2z" fill="none" stroke="#3ec43e" stroke-dasharray="2 1"/><use href="#cursor" x="8" y="5" width="8" height="11"/></svg></button>
                <span class="grip"></span>
                <button class="dark" aria-label="X 射线显示"><svg width="18" height="16"><path d="m3 4 5-2 7 1v9l-5 3-7-3zM3 4l7 2 5-3M10 6v9" fill="none" stroke="#ccc"/></svg></button>
                <button class="dark" aria-label="X 射线显示活动组件"><svg width="18" height="16"><path d="M3.500 5.500h8v8h-8zM6.500 2.500h8v8h-8z" fill="none" stroke="#bbb"/></svg></button>
                <button class="dark" aria-label="X 射线显示关节"><svg width="18" height="16"><path d="M14 3 5 8l8 4" fill="none" stroke="#ccc" stroke-width="1.500"/><circle cx="5" cy="8" r="2.500" fill="#ccc"/><circle cx="13" cy="12" r="1.500" fill="#ccc"/><circle cx="13" cy="4" r="1.500" fill="#ccc"/></svg></button>
            </div>
            <div class="viewport">
                <svg class="grid" viewBox="0 0 995 607" preserveAspectRatio="xMidYMid meet">
                    <g id="grid-lines"></g>
                    <path class="grid-axis" d="M340.400 229.300 717.400 406.200M654.600 229.300 277.600 406.200"/>
                </svg>
                <svg class="view-cube" width="84" height="84">
                    <ellipse cx="43" cy="60" rx="42" ry="22" fill="url(#cubeShade)"/>
                    <path d="M8 17 41 5l35 12-36 16z" fill="#c3cad2"/>
                    <path d="M8 17 40 33v41L11 56z" fill="#b3bcc6"/>
                    <path d="m40 33 36-16-4 39-32 18z" fill="#a8b2bd"/>
                    <path d="M8 17 41 5l35 12-36 16zM40 33v41" fill="none" stroke="#8b949e" stroke-dasharray="5 2"/>
                    <text x="17" y="50">前</text>
                    <text x="48" y="50">右</text>
                </svg>
                <svg class="axis" width="40" height="40"><path d="M17 28V15" stroke="#0f0"/><path d="m17 28 7 2" stroke="#f00"/><path d="m17 28-7 3" stroke="#00f"/><text x="13" y="12" fill="#0f0">y</text><text x="24" y="32" fill="#f00">x</text><text x="3" y="32" fill="#00f">z</text></svg>
                <span class="camera-name">persp</span>
            </div>
        </section>

        <span class="vdragger"></span>

        <!-- channel box / layer editor -->
        <aside class="channels">
            <div class="dock-title">
                <span class="dots"></span><h2>通道盒/层编辑器</h2><span class="dots"></span>
                <button aria-label="浮动"><svg width="12" height="12"><path d="M4.500 1.500h6v5h-6zM1.500 5.500h6v5h-6z" fill="#555" stroke="#000" stroke-width="1.500"/></svg></button>
                <button aria-label="关闭面板"><svg width="12" height="12"><path d="m2 2 8 8M10 2l-8 8" stroke="#000" stroke-width="2"/></svg></button>
            </div>
            <div class="channel-tools">
                <button aria-label="操纵器"><svg width="16" height="16"><path d="m8 9-6 1" stroke="#24d" stroke-width="3"/><path d="m9 10 5 4" stroke="#d22" stroke-width="3"/><path d="M9 9V2" stroke="#2b2" stroke-width="2"/><path d="M6 6l3-5 3 5z" fill="#2b2"/></svg></button>
                <button aria-label="速度"><svg width="16" height="16"><circle cx="8" cy="8" r="6" fill="#555" stroke="#aaa" stroke-width="2"/><path d="M8 3v5l-3 3A5 5 0 0 0 8 3z" fill="#bbb"/></svg></button>
                <button aria-label="双曲线"><svg width="16" height="16"><path d="M2 14 13 3M8 3h5v5" fill="none" stroke="#999" stroke-width="2"/></svg></button>
            </div>
            <nav class="dock-menu"><button>通道</button><button>编辑</button><button>对象</button><button>显示</button></nav>
            <div class="channel-list"></div>
            <div class="splitter"></div>
            <div class="tabs layer-tabs"><button class="active">显示</button><button>渲染</button><button>动画</button></div>
            <div class="layer-editor">
                <nav class="layer-menu"><button>层</button><button>选项</button><button>帮助</button></nav>
                <div class="layer-tools">
                    <button aria-label="上移"><svg width="20" height="18"><path d="M3.500 16V3M2 6l1.500-4L5 6z" stroke="#d22" fill="#d22"/><use href="#layers" x="6" y="1" width="14" height="16"/></svg></button>
                    <button aria-label="下移"><svg width="20" height="18"><path d="M3.500 1v13M2 12l1.500 4L5 12z" stroke="#d22" fill="#d22"/><use href="#layers" x="6" y="1" width="14" height="16"/></svg></button>
                    <button aria-label="新建空层"><svg width="20" height="18"><path d="m2 13 5-4 11 2-4 5z" fill="#eee"/><use href="#spark" x="10" y="0" width="9" height="10"/></svg></button>
                    <button aria-label="从选定对象新建层"><svg width="20" height="18"><path d="m2 13 5-4 11 2-4 5z" fill="#eee"/><circle cx="8" cy="9" r="4" fill="url(#blueBall)"/><use href="#spark" x="10" y="0" width="9" height="10"/></svg></button>
                </div>
                <div class="layer-list">
                    <div class="scrollbar">
                        <button aria-label="向左滚动">◀</button>
                        <span class="thumb"></span><span class="track"></span>
                        <button aria-label="向左滚动一页">◀</button>
                        <button aria-label="向右滚动">▶</button>
                    </div>
                </div>
            </div>
        </aside>
    </main>

    <!-- time slider -->
    <div class="timeline row">
        <span class="dragger"></span>
        <div class="time-slider">
            <span class="current-frame">1</span>
            <ol id="ticks"></ol>
        </div>
        <input class="field" aria-label="当前时间" value="1.00">
        <div class="playback">
            <button aria-label="转至开头"><svg width="20" height="18"><path d="M2 3h3v12H2zM12 3v12L6 9zM19 3v12l-6-6z"/></svg></button>
            <button aria-label="后退一帧"><svg width="20" height="18"><path d="M3 3h3v12H3zM16 3v12L8 9z"/></svg></button>
            <button aria-label="后退一关键帧"><svg width="20" height="18"><path d="M3 3h3v12H3zM17 3v12L9 9z"/><path class="key" d="M4.500 0v18"/></svg></button>
            <button aria-label="向后播放"><svg width="20" height="18"><path d="M15 2v13L4 8.500z"/></svg></button>
            <button aria-label="向前播放"><svg width="20" height="18"><path d="m4 2 11 6.500L4 15z"/></svg></button>
            <button aria-label="前进一关键帧"><svg width="20" height="18"><path d="M14 3h3v12h-3zM3 3v12l9-6z"/><path class="key" d="M15.500 0v18"/></svg></button>
            <button aria-label="前进一帧"><svg width="20" height="18"><path d="M14 3h3v12h-3zM4 3v12l8-6z"/></svg></button>
            <button aria-label="转至结尾"><svg width="20" height="18"><path d="M15 3h3v12h-3zM1 3v12l6-6zM8 3v12l6-6z"/></svg></button>
        </div>
    </div>

    <!-- range slider -->
    <div class="range row">
        <span class="dragger"></span>
        <input class="field" aria-label="动画开始时间" value="1.00">
        <input class="field" aria-label="播放开始时间" value="1.00">
        <div class="range-slider"><div class="range-bar"><i></i><span>1</span><span class="end">120</span><i></i></div></div>
        <input class="field" aria-label="播放结束时间" value="120.00">
        <input class="field" aria-label="动画结束时间" value="200.00">
        <button class="drop" aria-label="选择动画层"><svg width="10" height="6"><path d="M1 .500h8l-4 5z" fill="#444" stroke="#999"/></svg></button>
        <input class="set-name" aria-label="动画层" value="无动画层">
        <button class="drop" aria-label="选择角色集"><svg width="10" height="6"><path d="M1 .500h8l-4 5z" fill="#444" stroke="#999"/></svg></button>
        <input class="set-name" aria-label="角色集" value="无角色集">
        <button class="plain" aria-label="自动关键帧"><svg width="20" height="16"><circle cx="5" cy="8" r="3" fill="none" stroke="#aaa"/><path d="M8 8h9M12 8v3M16 8v3" stroke="#aaa" stroke-width="1.500"/></svg></button>
        <button class="plain" aria-label="首选项"><svg width="14" height="16"><path d="M0 1h14v14H0z" fill="#eee"/><path d="M0 1h14v3H0z" fill="#4f8cc4"/><circle cx="10" cy="6" r="1.500" fill="#b22"/><path d="m2 9 4-2 3 1 3 2M8 8l-3 5M6 10l4 4M1 12l3 1M2 6h3" fill="none" stroke="#c22" stroke-width="1.500"/></svg></button>
    </div>

    <!-- command line -->
    <div class="command row">
        <span class="dragger"></span>
        <label for="mel">MEL</label>
        <input id="mel" type="text">
        <output class="result"></output>
        <button class="plain" aria-label="脚本编辑器"><svg width="14" height="16"><path d="M0 1h14v14H0z" fill="#eee"/><path d="M0 1h14v3H0z" fill="#4f8cc4"/><path d="M2 6h10v3H2zM2 10h10v3H2z" fill="#bbb" stroke="#222"/></svg></button>
    </div>

    <footer class="helpline">
        <span class="dragger"></span>
        <div class="help-text"></div>
    </footer>

    <!-- notes drawn over the window -->
    <div class="watermark" aria-hidden="true">微信公众号：管家插件</div>
    <svg class="pointer" width="78" height="148" aria-hidden="true"><path d="M0 147 62 16l-5-5L74 0l2 23-6-3L1 148z"/></svg>

    <script src="script.js"></script>
</body>
</html>
```
FILE: styles.css
```
/* base */
* {
    box-sizing: border-box;
}

body {
    margin: 0;
    min-height: 100vh;
    display: flex;
    flex-direction: column;
    position: relative;
    overflow: hidden;
    background: #444;
    color: #c8c8c8;
    font-family: "Noto Sans", "Noto Sans CJK SC", sans-serif;
    font-size: 12px;
    line-height: 16px;
}

button,
input,
select {
    font: inherit;
    color: inherit;
    margin: 0;
    padding: 0;
    border: 0;
    background: none;
}

button {
    flex: none;
    white-space: nowrap;
}

svg {
    display: block;
}

.defs {
    position: absolute;
}

/* title bar */
.titlebar {
    display: flex;
    align-items: center;
    height: 35px;
    padding-left: 8px;
    background: #fff;
    color: #000;
}

.titlebar h1 {
    flex: 1;
    margin: 0 0 2px 6px;
    font-size: 15px;
    font-weight: 400;
    line-height: 20px;
}

.window-buttons {
    display: flex;
    gap: 44px;
    padding: 0 19px 4px 0;
}

/* menus */
.menubar,
.panel-menu,
.dock-menu,
.layer-menu {
    display: flex;
    gap: 15px;
    align-items: center;
}

.menubar {
    height: 20px;
    padding: 3px 8px 0;
    border-bottom: 1px solid #2e2e2e;
}

/* grips */
.dragger {
    flex: none;
    align-self: stretch;
    width: 6px;
    margin: 4px 0 4px 6px;
    background-image: radial-gradient(circle at 1px 1px, #666 1px, transparent 1px), radial-gradient(circle at 4px 4px, #5c5c5c 1px, transparent 1px);
    background-size: 6px 6px;
}

.grip {
    flex: none;
    width: 11px;
    height: 24px;
    background: linear-gradient(#2a2a2a, #2a2a2a) 5px 8px / 1px 8px no-repeat, linear-gradient(#808080, #808080) 4px 7px / 3px 10px no-repeat, linear-gradient(#2a2a2a, #2a2a2a) 5px 0 / 1px 100% no-repeat, linear-gradient(#5a5a5a, #5a5a5a) 6px 0 / 1px 100% no-repeat;
}

.fold {
    flex: none;
    width: 11px;
    height: 24px;
    background: linear-gradient(#666, #666) 3px 0 / 1px 100% no-repeat;
    display: flex;
    align-items: center;
}

.fold::after {
    content: "";
    margin-left: 4px;
    border: 4px solid transparent;
    border-left: 4px solid #6c6c6c;
    border-right: 0;
}

/* status line */
.statusline {
    display: flex;
    align-items: center;
    height: 33px;
    border-bottom: 1px solid #333;
    box-shadow: inset 0 1px #505050;
}

.menu-set {
    appearance: none;
    width: 99px;
    height: 21px;
    margin: 0 0 4px;
    padding-left: 4px;
    border: 1px solid #2b2b2b;
    border-radius: 3px;
    background: linear-gradient(to bottom right, #bbb 50%, transparent 50%) 90px 8px / 4px 5px no-repeat, linear-gradient(to bottom left, #bbb 50%, transparent 50%) 86px 8px / 4px 5px no-repeat, linear-gradient(#333, #333) 82px 0 / 1px 100% no-repeat, linear-gradient(#656565, #555);
}

.tools {
    display: flex;
    align-items: center;
}

.tools button {
    display: grid;
    place-items: center;
    width: 26px;
    height: 26px;
}

.tools .on,
.panel-tools .on {
    border: 1px solid #2c2c2c;
    border-radius: 3px;
    background: #5c5c5c;
}

.live-surface,
.set-name {
    width: 100px;
    height: 26px;
    padding: 0 3px;
    border: 1px solid #4d4d4d;
    border-radius: 3px;
    background: #424242;
}

.sidebar-toggles {
    margin-left: auto;
    margin-right: -1px;
}

/* shelf */
.shelf {
    display: flex;
    height: 72px;
    border-bottom: 2px solid #2c2c2c;
    padding-bottom: 1px;
}

.shelf-side {
    display: flex;
    flex-direction: column;
    width: 22px;
    margin: 3px 3px 1px 2px;
    border: 1px solid #2e2e2e;
    border-right-color: #666;
}

.shelf-chip {
    width: 12px;
    height: 9px;
    margin: auto 4px 4px;
    border-radius: 2px;
    background: #6c6c6c;
}

.shelf-menu {
    display: grid;
    place-items: center;
    height: 18px;
    border-top: 1px solid #aaa;
}

.shelf-body {
    flex: 1;
    min-width: 0;
    display: flex;
    flex-direction: column;
}

.tabs {
    display: flex;
    align-items: flex-end;
}

.tabs button {
    height: 18px;
    padding: 0 14px;
    border: 1px solid #2a2a2a;
    border-width: 1px 1px 0;
    border-left-color: #555;
    background: linear-gradient(#494949, #3f3f3f);
}

.tabs .active {
    height: 20px;
    border-radius: 3px 3px 0 0;
    border-color: #5c5c5c;
    background: #606060;
}

.shelf .tabs {
    height: 25px;
    margin-left: -1px;
}

.trash {
    margin: 0 1px 2px auto;
}

.shelf-icons {
    display: flex;
    align-items: center;
    height: 41px;
    margin: 1px 3px 0 0;
    padding: 0 4px;
    border: 1px solid #2a2a2a;
    border-radius: 3px;
    box-shadow: inset 0 1px #555;
}

.shelf-icons button {
    width: 35px;
    padding: 0 2px;
}

.shelf-icons svg {
    width: 31px;
    height: 31px;
}

.shelf-icons .ktools {
    position: relative;
    width: 46px;
    height: 39px;
    margin-left: -7px;
    padding: 0 0 4px 4px;
    border: 3px solid #fb3838;
}

.ktools span {
    position: absolute;
    left: 4px;
    bottom: 1px;
    color: #ddd;
}

/* workspace */
.workspace {
    flex: 1;
    display: flex;
    min-height: 0;
    padding-top: 3px;
}

.toolbox {
    display: flex;
    flex-direction: column;
    gap: 3px;
    width: 38px;
    margin: 3px 4px 4px 4px;
    padding-left: 1px;
    border-right: 1px solid #606060;
}

.hdragger {
    height: 7px;
    margin-right: 2px;
    background-image: radial-gradient(circle at 1px 1px, #666 1px, transparent 1px), radial-gradient(circle at 4px 4px, #5c5c5c 1px, transparent 1px);
    background-size: 6px 6px;
}

.tool {
    width: 34px;
    height: 34px;
    padding: 1px;
    border: 1px solid #2d2d2d;
    border-radius: 2px;
    box-shadow: inset 0 0 0 1px #585858;
}

.tool.on {
    background: #a0a0a0;
}

.tool.last {
    margin: 35px 0 11px;
}

.layout {
    width: 34px;
    height: 35px;
    padding: 1px;
}

.layout svg {
    width: 32px;
    height: 33px;
    border-radius: 2px;
}

.layout-menu {
    display: grid;
    place-items: center;
    width: 33px;
    height: 33px;
    border: 1px solid #2d2d2d;
    border-top-color: #666;
    border-left-color: #666;
}

.spacer {
    flex: 1;
}

.maya-logo {
    position: relative;
    width: 32px;
    margin-left: 1px;
}

.maya-logo b {
    position: absolute;
    right: 0;
    bottom: 0;
    font-size: 8px;
    line-height: 8px;
    font-weight: 400;
    color: #333;
}

/* viewport panel */
.panel {
    flex: 1;
    min-width: 0;
    display: flex;
    flex-direction: column;
    margin-bottom: 1px;
    border: 1px solid #808080;
}

.panel-menu {
    height: 20px;
    padding: 2px 7px 0;
}

.panel-tools {
    display: flex;
    align-items: center;
    height: 20px;
    padding-bottom: 2px;
}

.panel-tools .grip {
    height: 14px;
    background-position: 4px 4px, 3px 3px, 4px 0, 5px 0;
    background-size: 1px 6px, 3px 8px, 1px 100%, 1px 100%;
}

.panel-tools button {
    display: grid;
    place-items: center;
    width: 20px;
    height: 18px;
}

.panel-tools .dark {
    border: 2px solid #444;
    border-radius: 4px;
    background: #262626;
}

.viewport {
    flex: 1;
    min-height: 0;
    position: relative;
    background: linear-gradient(#7c90a8, #4b5661 50%, #2b2f34 80%, #18191a);
}

.grid {
    width: 100%;
    height: 100%;
    position: absolute;
}

.grid-line {
    stroke: #808080;
    shape-rendering: crispEdges;
}

.grid-axis {
    stroke: #000;
    shape-rendering: crispEdges;
}

.view-cube {
    position: absolute;
    right: 10px;
    top: 16px;
}

.view-cube text {
    font-size: 20px;
    fill: #79838e;
}

.axis {
    position: absolute;
    left: 9px;
    bottom: 10px;
    font: bold 11px "DejaVu Sans Mono", monospace;
}

.camera-name {
    position: absolute;
    left: 50%;
    bottom: 5px;
    margin-left: -23px;
    font: bold 11px/16px "DejaVu Sans Mono", monospace;
    color: #0b4420;
}

.vdragger {
    width: 4px;
    height: 212px;
    margin: auto 0;
    background-image: radial-gradient(circle at 3px 1px, #5c5c5c 1px, transparent 1px);
    background-size: 6px 6px;
}

/* channel box and layer editor */
.channels {
    display: flex;
    flex-direction: column;
    width: 228px;
    padding-left: 6px;
    overflow: hidden;
}

.dock-title {
    display: flex;
    align-items: center;
    gap: 2px;
    height: 20px;
    margin-right: -3px;
}

.dock-title h2 {
    margin: 0 10px 0 12px;
    font-size: 10px;
    line-height: 16px;
    font-weight: 400;
}

.dots {
    flex: 1;
    height: 6px;
    background-image: radial-gradient(circle at 1px 1px, #666 1px, transparent 1px), radial-gradient(circle at 4px 4px, #5c5c5c 1px, transparent 1px);
    background-size: 6px 6px;
}

.dock-title button {
    display: grid;
    place-items: center;
    width: 14px;
    height: 14px;
    border: 1px solid #222;
    border-radius: 3px;
    background: #5c5c5c;
}

.channel-tools {
    display: flex;
    justify-content: flex-end;
    gap: 4px;
    height: 21px;
    padding-top: 1px;
}

.dock-menu {
    height: 23px;
    padding-left: 6px;
}

.channel-list {
    flex: 1;
    margin-left: 1px;
    border: 2px solid #1f1f1f;
    border-right: 0;
    background: #2a2a2a;
    box-shadow: 0 1px #5c5c5c;
}

.splitter {
    width: 72px;
    height: 3px;
    margin: 5px auto;
    background-image: radial-gradient(circle at 1px 1px, #6a6a6a 1px, transparent 1px);
    background-size: 5px 5px;
}

.layer-editor {
    border: 1px solid #2a2a2a;
    border-right: 0;
    margin-bottom: 2px;
}

.layer-menu {
    height: 23px;
    padding-left: 9px;
}

.layer-tools {
    display: flex;
    justify-content: flex-end;
    gap: 5px;
    height: 24px;
    padding: 1px 4px 0 0;
}

.layer-list {
    display: flex;
    align-items: flex-end;
    height: 101px;
    margin: 0 2px 2px;
    padding: 1px 2px;
    border: 1px solid #1f1f1f;
    background: #2a2a2a;
}

.scrollbar {
    flex: 1;
    display: flex;
    height: 15px;
    gap: 2px;
}

.scrollbar button {
    width: 14px;
    background: #5a5a5a;
    font-size: 8px;
    line-height: 15px;
    font-family: "DejaVu Sans", sans-serif;
    color: #ddd;
}

.thumb {
    flex: 3;
    background: #606060;
    display: grid;
    place-items: center;
}

.thumb::after {
    content: "";
    width: 19px;
    height: 11px;
    background-image: radial-gradient(circle at 1px 1px, #2f2f2f 1px, transparent 1px);
    background-size: 4px 4px;
}

.track {
    flex: 2;
    background: #393939;
}

/* rows below the viewport */
.row {
    display: flex;
    align-items: center;
    gap: 4px;
    border-top: 1px solid #333;
    box-shadow: inset 0 1px #4e4e4e;
}

.row .dragger {
    margin-right: -4px;
}

.field {
    flex: none;
    width: 68px;
    height: 23px;
    padding: 0 2px;
    border: 1px solid #1f1f1f;
    border-radius: 3px;
    box-shadow: 0 0 0 1px #505050;
    background: #2b2b2b;
}

.timeline {
    height: 36px;
}

.timeline .field {
    height: 19px;
}

.time-slider {
    flex: 1;
    min-width: 0;
    display: flex;
    height: 30px;
    margin-left: 1px;
    overflow: hidden;
    background: #262626;
    border-right: 1px solid #888;
    border-bottom: 1px solid #777;
}

.current-frame {
    flex: none;
    width: 7px;
    margin: 2px 24px 1px 7px;
    padding-top: 10px;
    background: #5a5a5a;
    color: #fff;
}

.time-slider ol {
    flex: 1;
    display: flex;
    margin: 0;
    padding: 0;
    list-style: none;
    color: #7c7c7c;
}

.time-slider li {
    flex: none;
    width: calc(100% / 23.3);
    height: 29px;
    white-space: nowrap;
    background: linear-gradient(#888, #888) 0 17px / 2px 12px no-repeat;
}

.playback {
    display: flex;
    width: 221px;
    padding: 3px 3px 0 4px;
    justify-content: space-between;
}

.playback path {
    fill: #bbb;
    stroke: #222;
}

.playback .key {
    stroke: #d22;
}

.range {
    height: 29px;
}

.range .dragger {
    margin-right: -2px;
}

.range-slider {
    flex: 1;
    height: 23px;
    padding: 3px 4px 1px;
    background: #242424;
    border-right: 1px solid #777;
    border-bottom: 1px solid #666;
}

.range-bar {
    display: flex;
    align-items: center;
    gap: 5px;
    width: 62%;
    height: 18px;
    padding: 0 5px;
    background: #646464;
}

.range-bar i {
    width: 9px;
    height: 12px;
    border: solid #222;
    border-width: 0 1px 1px 0;
}

.end {
    margin-left: auto;
}

.drop {
    width: 15px;
    display: grid;
    place-items: center;
}

.set-name {
    height: 22px;
}

.range .plain:last-child,
.command .plain:last-child {
    margin-right: 1px;
}

.command {
    height: 31px;
}

.command label {
    padding: 0 8px 0 11px;
}

#mel,
.result {
    flex: 1;
    height: 25px;
    border: 1px solid #505050;
    border-radius: 3px;
    background: #2b2b2b;
}

.command .result {
    margin-left: 3px;
    border: 1px solid #222;
    background: #000;
    border-radius: 0;
}

.helpline {
    display: flex;
    height: 24px;
    border-top: 1px solid #333;
}

.help-text {
    flex: 1;
    margin: 3px 0 0 1px;
    border: solid #222;
    border-width: 1px 0 0 1px;
    background: linear-gradient(135deg, transparent 50%, #222 50%, #222 60%, #666 60%, #666 68%, #222 68%) 100% 100% / 10px 10px no-repeat;
}

/* notes over the window */
.watermark {
    position: absolute;
    top: 146px;
    right: -45px;
    font-size: 56px;
    line-height: 56px;
    white-space: nowrap;
    color: #c4c4c4;
    -webkit-text-stroke: 1px #c4c4c4;
    opacity: .72;
    transform: rotate(-31deg);
    pointer-events: none;
}

.pointer {
    position: absolute;
    top: 157px;
    right: 164px;
    fill: #fb3838;
    pointer-events: none;
}
```
FILE: script.js
```
// ground grid: 24 x 24 cells, projected around the centre of the view
function project(u, v) {
    const s = u + v;
    const d = u - v;
    const w = 1 - s / 6;
    return [497.5 + 183.25 * d / w, 303 + 86 * s / w];
}

const gridLines = document.getElementById('grid-lines');

function addLine(a, b) {
    const line = document.createElementNS('http://www.w3.org/2000/svg', 'line');
    line.setAttribute('class', 'grid-line');
    line.setAttribute('x1', a[0]);
    line.setAttribute('y1', a[1]);
    line.setAttribute('x2', b[0]);
    line.setAttribute('y2', b[1]);
    gridLines.appendChild(line);
}

for (let i = -12; i <= 12; i++) {
    const t = i / 12;
    addLine(project(t, -1), project(t, 1));
    addLine(project(-1, t), project(1, t));
}

// frame numbers on the time slider
const ticks = document.getElementById('ticks');
for (let frame = 5; frame <= 120; frame += 5) {
    const li = document.createElement('li');
    li.textContent = frame;
    ticks.appendChild(li);
}
```
